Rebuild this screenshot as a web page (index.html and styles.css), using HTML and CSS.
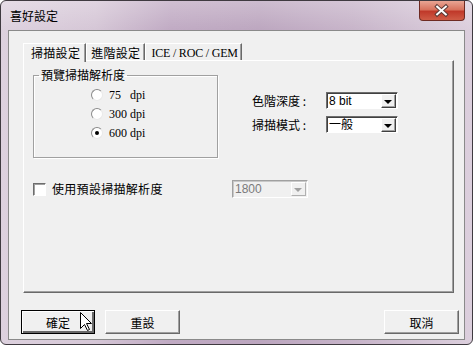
FILE: index.html
```html
<!DOCTYPE html>
<html lang="zh-Hant">
<head>
    <meta charset="UTF-8">
    <title>喜好設定</title>
    <link rel="stylesheet" href="styles.css">
</head>
<body>
    <div class="window">
        <div class="titlebar">
            <span class="title">喜好設定</span>
            <span class="close">
                <svg width="46" height="20" viewBox="0 0 46 20">
                    <path d="M18.5 5.5 L27.5 13.5 M27.5 5.5 L18.5 13.5" stroke="#5a3a36" stroke-width="4" stroke-linecap="square"/>
                    <path d="M18.5 5.5 L27.5 13.5 M27.5 5.5 L18.5 13.5" stroke="#fff" stroke-width="2" stroke-linecap="square"/>
                </svg>
            </span>
        </div>

        <div class="client">
            <div class="tabs">
                <span class="tab active">掃描設定</span>
                <span class="tab">進階設定</span>
                <span class="tab latin">ICE / ROC / GEM</span>
            </div>

            <div class="panel">
                <div class="top">
                    <fieldset class="group">
                        <legend>預覽掃描解析度</legend>
                        <div class="radios">
                            <label class="radio"><span class="dot"></span>75&nbsp;&nbsp; dpi</label>
                            <label class="radio"><span class="dot"></span>300 dpi</label>
                            <label class="radio"><span class="dot on"></span>600 dpi</label>
                        </div>
                    </fieldset>

                    <div class="fields">
                        <div class="field">
                            <span class="lbl">色階深度 :</span>
                            <span class="combo"><span class="val">8 bit</span><span class="drop"></span></span>
                        </div>
                        <div class="field">
                            <span class="lbl">掃描模式 :</span>
                            <span class="combo"><span class="val">一般</span><span class="drop"></span></span>
                        </div>
                    </div>
                </div>

                <div class="default-row">
                    <span class="check"></span>
                    <span class="check-lbl">使用預設掃描解析度</span>
                    <span class="combo disabled"><span class="val">1800</span><span class="drop"></span></span>
                </div>
            </div>

            <div class="buttons">
                <button class="btn default">確定</button>
                <button class="btn">重設</button>
                <button class="btn cancel">取消</button>
            </div>
        </div>
    </div>

    <svg class="cursor" width="13" height="20" viewBox="0 0 13 20">
        <path d="M0.5 0.5 L0.5 16.5 L4.5 12.5 L7.5 18.5 L9.5 17.5 L6.5 11.5 L11.5 11.5 Z" fill="#fff" stroke="#000"/>
    </svg>
</body>
</html>
```

FILE: styles.css
```css
body {
    margin: 0;
    width: 473px;
    height: 345px;
    font-family: "Liberation Serif", "Noto Sans CJK TC", serif;
    font-size: 12px;
    line-height: 14px;
    color: #000;
    background: #fff;
}

.window {
    box-sizing: border-box;
    width: 473px;
    height: 345px;
    border: 1px solid #3f3a40;
    border-radius: 6px;
    padding: 0 7px 4px 7px;
    background:
        linear-gradient(180deg, rgba(255,255,255,0.25), rgba(255,255,255,0) 30px),
        linear-gradient(90deg, #ddd1de 0%, #d5c6d6 20%, #c0aac3 36%, #bca6bf 55%, #c7b4c9 75%, #dccfdd 100%);
}

.titlebar {
    height: 29px;
    display: flex;
    justify-content: space-between;
    align-items: flex-start;
}

.title {
    font-family: "Noto Sans CJK TC", sans-serif;
    margin: 8px 0 0 2px;
    line-height: 14px;
}

.close {
    width: 46px;
    height: 20px;
    box-sizing: border-box;
    border: 1px solid #6e2a22;
    border-top: none;
    border-radius: 0 0 4px 4px;
    background: linear-gradient(180deg, #e9a594 0%, #d8735e 45%, #c0392a 55%, #cf5c46 100%);
    display: flex;
    align-items: center;
    justify-content: center;
}

.close svg { display: block; margin-left: -1px }

.client {
    height: 310px;
    box-sizing: border-box;
    border: 1px solid #8a8a8a;
    background: #f0f0f0;
    display: flex;
    flex-direction: column;
}

/* tabs */
.tabs {
    display: flex;
    margin: 12px 0 0 14px;
    height: 17px;
}

.tab {
    font-family: "Noto Sans CJK TC", sans-serif;
    padding: 2px 4px 0 4px;
    border-top: 1px solid #fff;
    border-left: 1px solid #fff;
    border-right: 1px solid #696969;
    box-shadow: inset -1px 0 #a0a0a0;
    letter-spacing: 0.3px;
}

.tab.latin {
    font-family: "Liberation Serif", "Noto Sans CJK TC", serif;
    padding: 2px 3px 0 5px;
    letter-spacing: -0.2px;
}

.tab.active {
    padding: 2px 5px 0 7px;
    background: #f0f0f0;
    position: relative;
    z-index: 1;
    height: 16px;
}

.panel {
    box-sizing: border-box;
    width: 431px;
    height: 233px;
    margin-left: 14px;
    border: 1px solid;
    border-color: #fff #696969 #696969 #fff;
    box-shadow: inset -1px -1px #a0a0a0;
    padding: 7px 0 0 9px;
}

.top { display: flex }

.group {
    box-sizing: border-box;
    width: 185px;
    height: 90px;
    margin: 0;
    padding: 0;
    border: 1px solid #a0a0a0;
    box-shadow: inset 1px 1px #fff, 1px 1px #fff;
}

.group legend {
    font-family: "Noto Sans CJK TC", sans-serif;
    margin-left: 5px;
    padding: 0 2px;
    line-height: 14px;
}

.radios {
    display: flex;
    flex-direction: column;
    gap: 5px;
    padding: 6px 0 0 57px;
}

.radio {
    display: flex;
    align-items: center;
    gap: 6px;
    height: 14px;
}

.dot {
    box-sizing: border-box;
    width: 12px;
    height: 12px;
    border-radius: 50%;
    border: 1px solid;
    border-color: #8a8a8a #e8e8e8 #e8e8e8 #8a8a8a;
    background: #fff;
    display: flex;
    align-items: center;
    justify-content: center;
}

.dot.on::after {
    content: "";
    width: 4px;
    height: 4px;
    border-radius: 50%;
    background: #000;
}

.fields {
    margin: 24px 0 0 34px;
    display: flex;
    flex-direction: column;
    gap: 7px;
}

.field {
    display: flex;
    align-items: center;
}

.lbl {
    font-family: "Noto Sans CJK TC", sans-serif;
    width: 74px;
}

.combo {
    box-sizing: border-box;
    width: 72px;
    height: 17px;
    border: 1px solid;
    border-color: #6d6d6d #fff #fff #6d6d6d;
    box-shadow: inset 1px 1px #404040;
    background: #fff;
    display: flex;
    justify-content: space-between;
    padding: 1px 1px 1px 2px;
}

.combo .val {
    font-family: "Liberation Sans", "Noto Sans CJK TC", sans-serif;
    font-size: 12px;
    line-height: 14px;
}

.drop {
    box-sizing: border-box;
    width: 15px;
    height: 14px;
    background: #f0f0f0;
    border: 1px solid;
    border-color: #fff #404040 #404040 #fff;
    box-shadow: inset -1px -1px #a0a0a0;
    display: flex;
    align-items: center;
    justify-content: center;
}

.drop::after {
    content: "";
    border-left: 4px solid transparent;
    border-right: 4px solid transparent;
    border-top: 4px solid #000;
    margin: 1px 0 0 -1px;
}

.default-row {
    display: flex;
    align-items: center;
    margin-top: 22px;
    height: 18px;
}

.check {
    box-sizing: border-box;
    width: 13px;
    height: 13px;
    border: 1px solid;
    border-color: #6d6d6d #fff #fff #6d6d6d;
    box-shadow: inset 1px 1px #a0a0a0;
    background: #fff;
}

.check-lbl {
    font-family: "Noto Sans CJK TC", sans-serif;
    margin-left: 6px;
    width: 180px;
    letter-spacing: 0.3px;
}

.combo.disabled {
    width: 76px;
    height: 18px;
    background: #f0f0f0;
    border-color: #a0a0a0 #fff #fff #a0a0a0;
    box-shadow: inset 1px 1px #c8c8c8;
}

.combo.disabled .val { color: #7a7a7a }

.combo.disabled .drop {
    border-color: #fff #b0b0b0 #b0b0b0 #fff;
    box-shadow: none;
}

.combo.disabled .drop::after { border-top-color: #a0a0a0 }

.buttons {
    display: flex;
    gap: 10px;
    margin: 17px 5px 0 12px;
}

.btn {
    box-sizing: border-box;
    width: 75px;
    height: 24px;
    margin: 0;
    padding: 0;
    font-family: "Noto Sans CJK TC", sans-serif;
    font-size: 12px;
    color: #000;
    background: #f0f0f0;
    border: 1px solid;
    border-color: #fff #696969 #696969 #fff;
    box-shadow: inset -1px -1px #a0a0a0;
}

.btn.default {
    width: 74px;
    border: 1px solid #000;
    box-shadow: inset 1px 1px #fff, inset -2px -2px #696969, inset -1px -1px #a0a0a0;
}

.btn.cancel { margin-left: auto }

.cursor {
    position: absolute;
    left: 80px;
    top: 312px;
}
```
